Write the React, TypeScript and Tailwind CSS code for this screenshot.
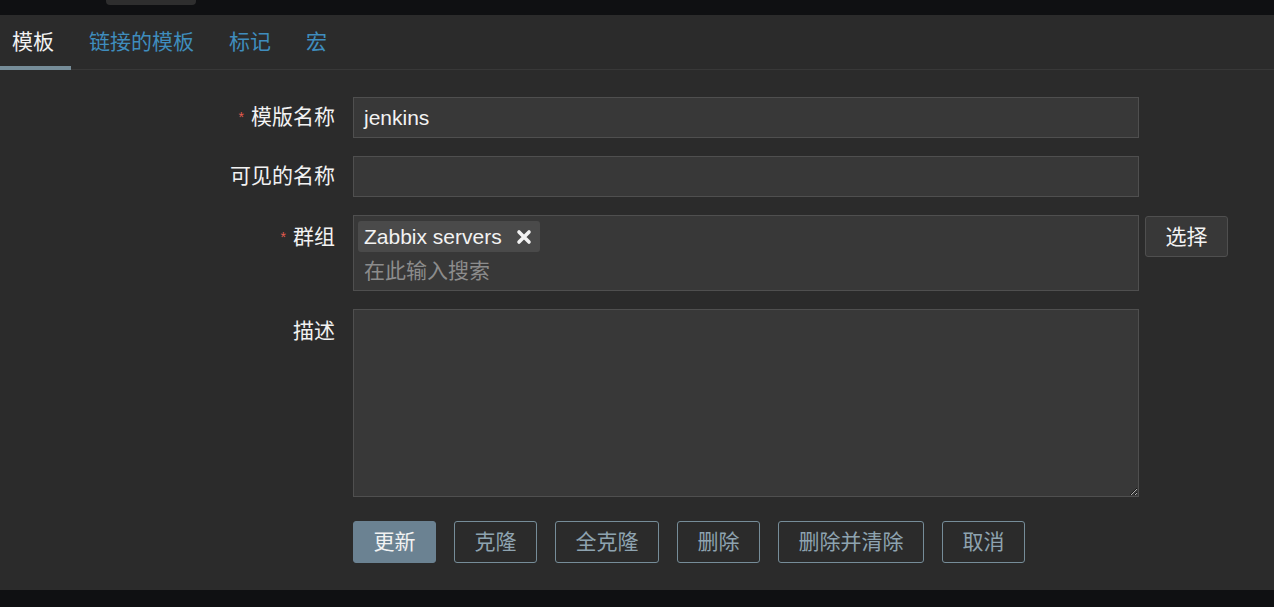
import React from "react";

const font = {
  fontFamily: '"Liberation Sans", "Noto Sans CJK SC", sans-serif',
};

const tabs = ["模板", "链接的模板", "标记", "宏"];

const buttons = ["克隆", "全克隆", "删除", "删除并清除", "取消"];

const Label: React.FC<{ text: string; required?: boolean; top?: string }> = ({
  text,
  required,
  top = "pt-[8px]",
}) => (
  <div className={`w-[335px] shrink-0 text-right text-[21px] leading-[24px] text-[#f2f2f2] ${top}`}>
    {required && <span className="mr-[7px] align-top text-[14px] text-[#e35b4f]">*</span>}
    {text}
  </div>
);

const App: React.FC = () => {
  return (
    <div style={font} className="flex h-screen w-full flex-col bg-[#0f1012]">
      <div className="h-[15px] shrink-0 bg-[#0f1012]">
        <div className="ml-[106px] h-[5px] w-[90px] rounded-b-[4px] bg-[#2e2e2e]" />
      </div>

      <div className="flex h-[55px] shrink-0 items-stretch border-b border-[#383838] bg-[#2b2b2b]">
        {tabs.map((t, i) => (
          <div
            key={t}
            className={`relative flex items-center text-[21px] ${
              i === 0 ? "pl-[12px] pr-[17px] text-[#f2f2f2]" : "pl-[18px] pr-[17px] text-[#3f8dbd]"
            }`}
          >
            {t}
            {i === 0 && (
              <span className="absolute bottom-[-1px] left-0 right-0 h-[4px] bg-[#768d99]" />
            )}
          </div>
        ))}
      </div>

      <div className="flex h-[520px] shrink-0 flex-col gap-[18px] bg-[#2b2b2b] pt-[27px]">
        <div className="flex gap-[18px]">
          <Label text="模版名称" required />
          <div className="flex h-[41px] w-[786px] items-center border border-[#4f4f4f] bg-[#383838] px-[10px] text-[21px] text-[#f2f2f2]">
            jenkins
          </div>
        </div>

        <div className="flex gap-[18px]">
          <Label text="可见的名称" />
          <div className="h-[41px] w-[786px] border border-[#4f4f4f] bg-[#383838]" />
        </div>

        <div className="flex gap-[18px]">
          <Label text="群组" required top="pt-[10px]" />
          <div className="flex h-[76px] w-[786px] flex-col items-start border border-[#4f4f4f] bg-[#383838] px-[4px] pt-[5px]">
            <div className="flex h-[31px] items-center gap-[14px] rounded-[3px] bg-[#4a4a4a] pl-[6px] pr-[8px] text-[21px] text-[#f2f2f2]">
              <span>Zabbix servers</span>
              <svg width="16" height="16" viewBox="0 0 16 16">
                <path d="M3 3 L13 13 M13 3 L3 13" stroke="#f2f2f2" strokeWidth="3.6" strokeLinecap="round" />
              </svg>
            </div>
            <div className="mt-[7px] pl-[6px] text-[21px] leading-[24px] text-[#8c8c8c]">在此输入搜索</div>
          </div>
          <div className="-ml-[12px] mt-[1px] flex h-[41px] w-[83px] items-center justify-center rounded-[3px] border border-[#4f4f4f] bg-[#383838] text-[21px] text-[#f2f2f2]">
            选择
          </div>
        </div>

        <div className="flex gap-[18px]">
          <Label text="描述" top="pt-[10px]" />
          <textarea
            readOnly
            style={{ colorScheme: "dark" }}
            className="h-[188px] w-[786px] resize border border-[#4f4f4f] bg-[#383838] outline-none"
          />
        </div>

        <div className="mt-[6px] flex gap-[18px] pl-[353px]">
          <div className="flex h-[42px] items-center rounded-[3px] border border-[#6b8292] bg-[#6b8292] px-[19.5px] text-[21px] text-[#f2f2f2]">
            更新
          </div>
          {buttons.map((b) => (
            <div
              key={b}
              className="flex h-[42px] items-center rounded-[3px] border border-[#768d99] px-[19.5px] text-[21px] text-[#8ea3b0]"
            >
              {b}
            </div>
          ))}
        </div>
      </div>

      <div className="flex-1 bg-[#0f1012]" />
    </div>
  );
};

export default App;
